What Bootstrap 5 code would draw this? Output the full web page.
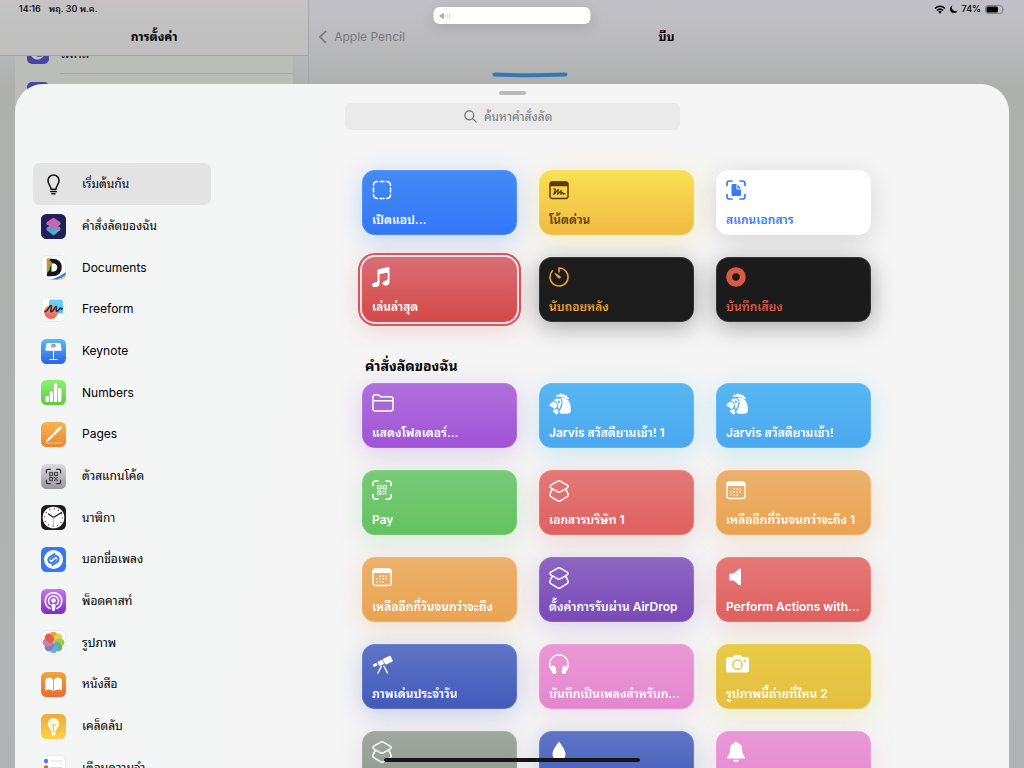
<!DOCTYPE html>
<html lang="th">
<head>
<meta charset="utf-8">
<meta name="viewport" content="width=device-width, initial-scale=1">
<title>การตั้งค่า</title>
<link href="https://cdn.jsdelivr.net/npm/bootstrap@5.3.0/dist/css/bootstrap.min.css" rel="stylesheet">
<style>
  body { font-family: Inter, "Noto Sans Thai Looped", "Noto Looped Thai", Loma, Waree, Garuda, "Noto Sans Thai", sans-serif; color: #000; background: #b4b6b6; }
  a, a:hover { color: inherit; text-decoration: none; }
  svg { display: block; flex: none; }

  /* Settings screen behind the sheet */
  .backdrop-page { background: linear-gradient(#c1c0c6 0, #bbbbbf 40px, #aeb0ae 84px, #b1b4b4 100%); }
  .master-pane { width: 30.2%; border-right: 1px solid #a5a6a9; }
  .master-head { height: 56px; background: linear-gradient(#c5c3c4, #bfbfbe); border-bottom: 1px solid #a3a4a4; }
  .status-line { height: 18px; font-size: 9px; font-weight: 500; line-height: 18px; padding: 0 19px; }
  .pane-title { font-size: 12px; font-weight: 700; line-height: 38px; margin: 0; text-align: center; }
  .settings-group { margin: -23px 15px 0; background: #bbbdb8; }
  .settings-row { height: 40px; padding-left: 12px; gap: 11px; font-size: 13px; }
  .settings-row + .settings-row .row-text { border-top: 1px solid #a6a9a6; }
  .row-text { height: 40px; line-height: 40px; }
  .settings-icon { width: 22px; height: 22px; border-radius: 5px; background: #4644a5; }
  .back-link { font-size: 12px; color: #77777b; gap: 7px; padding-left: 10px; }
  .back-link:hover { color: #77777b; }
  .volume-hud { top: 7px; left: 50%; width: 157px; height: 17px; transform: translateX(-50%); border-radius: 6px; background: #fff; box-shadow: 0 3px 14px #0002; padding-left: 6px; }

  /* Sheet */
  .sheet { top: 84px; left: 15px; right: 15px; bottom: 0; border-radius: 28px 28px 0 0; background: linear-gradient(100deg, #f3f5f5, #f5f5f5 30%); overflow: hidden; }
  .grabber { width: 27px; height: 4px; border-radius: 2px; background: #bababc; margin: 7px auto 8px; }
  .search-box { width: 335px; height: 27px; border-radius: 6px; background: #e9eae9; color: #77787a; gap: 7px; font-size: 12px; margin: 0 auto; cursor: text; }
  .search-box input { width: 76px; border: 0; padding: 0; background: none; outline: 0; color: inherit; }
  .search-box input::placeholder { color: #77787a; opacity: 1; }
  .side-nav { width: 209px; padding: 33px 13px 0 18px; }
  .side-link { height: 42px; border-radius: 7px; padding-left: 8px; gap: 16px; font-size: 12px; line-height: 24px; white-space: nowrap; }
  .side-nav li:nth-child(3n) .side-link { height: 41px; }
  .side-link.active { background: #e3e3e3; }
  .shortcut-area { padding-top: 40px; }
  .tile-grid { display: grid; grid-template-columns: repeat(3, 155px); gap: 22px; justify-content: center; }
  .section-title { width: 503px; margin: 32px auto 5px; font-size: 14px; font-weight: 700; line-height: 24px; }
  .tile { --glow: #0001; height: 65px; border: 0; border-radius: 13px; padding: 10px 9px 5px 10px; display: flex; flex-direction: column; justify-content: space-between; align-items: flex-start; text-align: left; color: #fff; font-size: 12px; font-weight: 600; background: linear-gradient(var(--from), var(--to)); box-shadow: 0 5px 24px var(--glow), inset 0 0 0 1px #ffffff1c; }
  .tile span { line-height: 20px; max-width: 100%; overflow: hidden; white-space: nowrap; }
  .t-azure { --from: #448bf7; --to: #3377f6; --glow: #448bf74d; }
  .t-note { --from: #f9e053; --to: #f0bb41; --glow: #f9e0534d; color: #60390a; }
  .t-white { --from: #fff; --to: #fff; --glow: #0002; color: #3b7cf2; }
  .t-music { --from: #d96e77; --to: #d44946; outline: 2px solid #d5565c; outline-offset: 2px; box-shadow: 0 0 0 2px #f3e3e3, 0 5px 24px #d4494640; }
  .t-timer { --from: #1c1c1c; --to: #1c1c1c; --glow: #0005; color: #ed9f38; }
  .t-record { --from: #1b1b1b; --to: #1b1b1b; --glow: #0005; color: #dc5946; }
  .t-purple { --from: #b06fdc; --to: #a153d7; --glow: #a153d740; }
  .t-sky { --from: #55b7f2; --to: #4ca8ef; --glow: #55d0f24d; }
  .t-green { --from: #78cb78; --to: #64c25f; --glow: #78cb7840; }
  .t-red { --from: #e47978; --to: #df605f; --glow: #e4797840; }
  .t-orange { --from: #ecb16c; --to: #eaa352; --glow: #ecb16c4d; }
  .t-violet { --from: #8c67c3; --to: #794ab8; --glow: #8c67c340; }
  .t-indigo { --from: #5e75c6; --to: #435abb; --glow: #5e75c64d; }
  .t-pink { --from: #e999d5; --to: #e586ce; --glow: #e999d540; }
  .t-yellow { --from: #e7cb45; --to: #e5be40; --glow: #e7dc454d; }
  .t-gray { --from: #9fa79e; --to: #8f9990; --glow: #9fa79e40; }
  .home-bar { left: 50%; bottom: 6px; width: 256px; height: 4px; border-radius: 2px; background: #151515; transform: translateX(-50%); }
</style>
</head>
<body>
<svg width="0" height="0" class="position-absolute" aria-hidden="true">
  <defs>
    <linearGradient id="g-key" x2="0" y2="1"><stop stop-color="#59bdf6"/><stop offset="1" stop-color="#2c61e6"/></linearGradient>
    <linearGradient id="g-num" x2="0" y2="1"><stop stop-color="#8df06f"/><stop offset="1" stop-color="#5ecb43"/></linearGradient>
    <linearGradient id="g-pag" x2="0" y2="1"><stop stop-color="#f5b54b"/><stop offset="1" stop-color="#ec8536"/></linearGradient>
    <linearGradient id="g-code" x2="0" y2="1"><stop stop-color="#dcdcde"/><stop offset="1" stop-color="#97969b"/></linearGradient>
    <linearGradient id="g-pod" x2="0" y2="1"><stop stop-color="#ca74f4"/><stop offset="1" stop-color="#7b2fb9"/></linearGradient>
    <linearGradient id="g-book" x2="0" y2="1"><stop stop-color="#f3a43c"/><stop offset="1" stop-color="#e96c30"/></linearGradient>
    <linearGradient id="g-tip" x2="0" y2="1"><stop stop-color="#f1a93b"/><stop offset="1" stop-color="#f9d248"/></linearGradient>
    <linearGradient id="g-s1" x2="1" y2="1"><stop stop-color="#ef4f8a"/><stop offset=".5" stop-color="#b96acb"/><stop offset="1" stop-color="#e8685e"/></linearGradient>
    <linearGradient id="g-s2" x2="1" y2="1"><stop stop-color="#ef6a62"/><stop offset=".45" stop-color="#4a9fe0"/><stop offset="1" stop-color="#56cfa8"/></linearGradient>
    <linearGradient id="g-ff" x2="0" y2="1"><stop stop-color="#f5a54f"/><stop offset="1" stop-color="#ec5d64"/></linearGradient>
    <linearGradient id="g-fb" x2="0" y2="1"><stop stop-color="#6bd5fa"/><stop offset="1" stop-color="#5ab9ee"/></linearGradient>
  </defs>
  <symbol id="i-layers" viewBox="0 0 20 22"><g fill="none" stroke="currentColor" stroke-width="1.500" stroke-linejoin="round"><path d="M8.300 1.300Q10 .3 11.700 1.300L18.200 5.100Q20 6.500 18.200 7.900L11.700 11.700Q10 12.700 8.300 11.700L1.800 7.900Q0 6.500 1.800 5.100Z"/><path d="M3.500 9.300L1.800 12.200Q-.1 15.300 1.800 16.700L8.300 20.700Q10 21.700 11.700 20.700L18.200 16.700Q20.100 15.300 18.200 12.200L16.500 9.300M1.800 12.200Q2.300 10.200 3.500 9.300M18.200 12.200Q17.700 10.200 16.500 9.300"/></g></symbol>
  <symbol id="i-scan" viewBox="0 0 20 20"><path fill="none" stroke="currentColor" stroke-width="1.700" stroke-linecap="round" d="M1 5.500V3.500Q1 1 3.500 1H6M14 1h2.500Q19 1 19 3.500V5.500M19 14.500v2Q19 19 16.500 19H14M6 19H3.500Q1 19 1 16.500v-2"/></symbol>
  <symbol id="i-qr" viewBox="0 0 10 10"><path fill="none" stroke="currentColor" stroke-width="1" d="M.5.5h3.500v3.500H.5ZM6 .5h3.500v3.500H6ZM.5 6H4v3.500H.5Z"/><path fill="currentColor" d="M1.700 1.700h1v1h-1zM7.200 1.700h1v1h-1zM1.700 7.200h1v1h-1zM5.500 5.500h1.300v1.300H5.500zM8.200 5.500h1.300v1.300H8.200zM6.800 6.800h1.500v1.500H6.800zM5.500 8.300h1.300v1.300H5.500zM8.200 8.300h1.300v1.300H8.200z"/></symbol>
  <symbol id="i-cal" viewBox="0 0 20 20"><rect x=".9" y="1.900" width="18.200" height="16.600" rx="2.600" fill="none" stroke="currentColor" stroke-width="1.400"/><path fill="currentColor" d="M1 6V4Q1 1.500 3.500 1.500h13Q19 1.500 19 4v2z"/><path stroke="currentColor" stroke-width="1.300" stroke-dasharray="1.300 1.700" d="M7.500 9h8.300M4.500 12h11.300M4.500 15h8.300"/></symbol>
  <symbol id="i-bird" viewBox="0 0 22 22"><path fill="currentColor" d="M12.500 4.700Q17 4 19.500 7.500Q21.800 10.500 21.800 15V18Q21.500 20.800 18 20.800H13Q10 20.500 10.500 18Q14.300 13 13.300 7.500Q13 5.700 11 4.900ZM6 6Q9 4.700 11.800 6.200Q13.500 10.500 9.800 16.500Q8.800 13 8.600 10.700Q7.500 7.800 4.700 7.800ZM0 12.500Q1.500 9.200 4.200 8.700Q7.300 8.700 8 12.200Q7.800 15.300 5.300 16Q4 14 0 12.500ZM4.500 17Q8 15.300 9 17Q10 20 8.200 21.300Q6.500 22 6 20L3.500 18.500ZM6.500 3.800L8.300 1.200L9.800 2L11.500.2L13 1.500L15 .8L15.700 2.300L18 2.500L18.300 4L20 5L19.300 6.300Q15.500 3 10 3.800Z"/><ellipse cx="9.900" cy="8.800" rx="1" ry="1.500" fill="#51b0f1"/></symbol>
</svg>

<div class="backdrop-page position-relative vh-100 overflow-hidden">
  <div class="d-flex h-100">
    <section class="master-pane overflow-hidden">
      <header class="master-head position-relative">
        <div class="status-line d-flex"><span class="pe-2">14:16</span><span>พฤ. 30 พ.ค.</span></div>
        <h1 class="pane-title">การตั้งค่า</h1>
      </header>
      <div class="overflow-hidden">
        <div class="settings-group">
          <a href="#focus" class="settings-row d-flex align-items-center">
            <svg class="settings-icon" viewBox="0 0 22 22"><path fill="#c3c4d0" d="M8 4A7 7 0 1 0 17 13A6 6 0 0 1 8 4Z"/></svg>
            <span class="row-text flex-fill">โฟกัส</span>
          </a>
          <a href="#screentime" class="settings-row d-flex align-items-center" aria-label="เวลาหน้าจอ">
            <span class="settings-icon"></span><span class="row-text flex-fill"></span>
          </a>
        </div>
      </div>
    </section>
    <section class="flex-fill">
      <div class="status-line d-flex justify-content-end align-items-center">
        <svg width="12" height="9" viewBox="0 0 12 9" class="me-1"><g fill="none" stroke="#000" stroke-width="1.500"><path d="M1 3.500Q6-1 11 3.500M2.900 5.500Q6 2.700 9.100 5.500"/></g><path d="M4.200 6.800Q6 5.400 7.800 6.800L6 8.700Z"/></svg>
        <svg width="8" height="8" viewBox="0 0 8 8" class="me-1"><path d="M2.500.3A4 4 0 1 0 7.700 5.400A3.700 3.700 0 0 1 2.500.3Z"/></svg>
        <span class="me-1">74%</span>
        <svg width="20" height="9" viewBox="0 0 20 9"><rect x=".5" y=".5" width="17" height="8" rx="2.500" fill="none" stroke="#818185"/><rect x="1.500" y="1.500" width="11.500" height="6" rx="1.500"/><path fill="#818185" d="M18.500 3Q20 4.500 18.500 6Z"/></svg>
      </div>
      <div class="row g-0 align-items-center">
        <div class="col-4"><a href="#pencil" class="back-link d-flex align-items-center"><svg width="8" height="14" viewBox="0 0 8 14"><path d="M7 1L1 7l6 6" fill="none" stroke="#77777b" stroke-width="1.600"/></svg><span>Apple Pencil</span></a></div>
        <div class="col-4"><h2 class="pane-title">บีบ</h2></div>
      </div>
      <svg width="76" height="6" viewBox="0 0 76 6" class="mt-3" style="margin-left: 25.600%"><path d="M2.500 2.500Q38 4 73.500 2.500" fill="none" stroke="#3579b8" stroke-width="4" stroke-linecap="round"/></svg>
    </section>
  </div>

  <div class="volume-hud position-absolute d-flex align-items-center" role="status" aria-label="ระดับเสียง">
    <svg width="12" height="8" viewBox="0 0 12 8"><path fill="#a8a8aa" d="M0 2.700h1.800L4.400.5v7L1.800 5.300H0Z"/><path d="M6 2.500Q7 4 6 5.500M7.700 1.500Q9.300 4 7.700 6.500M9.400.6Q11.600 4 9.400 7.400" fill="none" stroke="#cfcfd1" stroke-width=".8"/></svg>
  </div>

  <main class="sheet position-absolute d-flex flex-column" role="dialog" aria-label="คำสั่งลัด">
    <div>
      <div class="grabber"></div>
      <label class="search-box d-flex align-items-center justify-content-center mt-2">
        <svg width="13" height="13" viewBox="0 0 13 13"><g fill="none" stroke="#6f7072" stroke-width="1.200" stroke-linecap="round"><circle cx="5.300" cy="5.300" r="4.500"/><path d="M8.700 8.700l3.500 3.500"/></g></svg>
        <input type="text" placeholder="ค้นหาคำสั่งลัด" aria-label="ค้นหาคำสั่งลัด">
      </label>
    </div>
    <div class="d-flex">
      <nav class="side-nav flex-shrink-0">
        <ul class="list-unstyled m-0">
          <li><a href="#start" class="side-link active d-flex align-items-center">
            <svg width="25" height="25" viewBox="0 0 25 25"><g fill="none" stroke="#111" stroke-width="1.500" stroke-linecap="round"><path d="M10 17.200C9.900 13.500 7 12.500 7 8.500A5.500 5.500 0 0 1 18 8.500C18 12.500 15.100 13.500 15 17.200Z" stroke-linejoin="round"/><path d="M9.800 19.600h5.400M11 21.800h3"/></g></svg>
            เริ่มต้นกัน</a></li>
          <li><a href="#mine" class="side-link d-flex align-items-center">
            <svg width="25" height="25" viewBox="0 0 25 25"><rect width="25" height="25" rx="5.500" fill="#211f57"/><path fill="url(#g-s2)" d="M12.500 9.500L19 13.500Q20.500 15 19 16.300L13.700 20.500Q12.500 21.500 11.300 20.500L6 16.500Q4.500 15 6 13.500Z"/><path fill="url(#g-s1)" d="M11.300 4.300Q12.500 3.500 13.700 4.300L19 8Q20.500 9.500 19 11L16.500 12.500L19 14.500Q17 17 13.700 14.300L6 11Q4.500 9.500 6 8Z"/></svg>
            คำสั่งลัดของฉัน</a></li>
          <li><a href="#documents" class="side-link d-flex align-items-center">
            <svg width="25" height="25" viewBox="0 0 25 25"><rect x=".5" y=".5" width="24" height="24" rx="5.500" fill="#fff" stroke="#e9e9e9"/><path fill="none" stroke="#171717" stroke-width="4.500" d="M8.200 6H11Q18.500 6 18.500 12.500T10.500 19H8.200Z"/><path fill="#f18b32" d="M5.800 3.700h3v11l-3 3z"/><path fill="#62b946" d="M8.800 5l2.500 3-5.500 11z"/><path fill="#3378e6" d="M10 24.500Q19 22 24.500 17v4Q20 24 16 24.500Z"/><path fill="#f5cf42" d="M16 24.500Q21 23 24.500 20v1q-.5 3-3.500 3.500Z"/></svg>
            Documents</a></li>
          <li><a href="#freeform" class="side-link d-flex align-items-center">
            <svg width="25" height="25" viewBox="0 0 25 25"><rect x=".5" y=".5" width="24" height="24" rx="5.500" fill="#fff" stroke="#e9e9e9"/><rect x="8" y="2.500" width="14" height="14" rx="1.500" fill="url(#g-fb)"/><circle cx="10" cy="15" r="7" fill="url(#g-ff)"/><path d="M4 14.500C6 15 8.500 8.500 10 8.600S8.500 15 10.500 14.800S13.500 9 15 9.500S14 14.300 16 14.300S18.500 10.500 19.500 11S19.500 13.500 21.500 11.500" fill="none" stroke="#202a5c" stroke-width="1.500" stroke-linecap="round"/></svg>
            Freeform</a></li>
          <li><a href="#keynote" class="side-link d-flex align-items-center">
            <svg width="25" height="25" viewBox="0 0 25 25"><rect width="25" height="25" rx="5.500" fill="url(#g-key)"/><path fill="#fff" d="M6.500 4h12q.8 0 1 .8l1.200 6q.2.900-.7.900H5q-.9 0-.7-.9l1.200-6q.2-.8 1-.8ZM12 11.500h1V20h3.500v1h-8v-1H12Z"/><path fill="#e85d4f" d="M12.500 7V4.700A2.300 2.300 0 0 1 14.500 8Z"/><path fill="#f4b53f" d="M12.500 7L14.500 8A2.300 2.300 0 0 1 10.500 8Z"/><path fill="#4a9ff0" d="M12.500 7L10.500 8.200A2.300 2.300 0 0 1 12.500 4.700Z"/></svg>
            Keynote</a></li>
          <li><a href="#numbers" class="side-link d-flex align-items-center">
            <svg width="25" height="25" viewBox="0 0 25 25"><rect width="25" height="25" rx="5.500" fill="url(#g-num)"/><g fill="#fff"><rect x="4.500" y="16" width="3.300" height="6" rx=".8"/><rect x="8.700" y="11.500" width="3.300" height="10.500" rx=".8"/><rect x="12.900" y="3.500" width="3.300" height="18.500" rx=".8"/><rect x="17.100" y="8" width="3.300" height="14" rx=".8"/></g></svg>
            Numbers</a></li>
          <li><a href="#pages" class="side-link d-flex align-items-center">
            <svg width="25" height="25" viewBox="0 0 25 25"><rect width="25" height="25" rx="5.500" fill="url(#g-pag)"/><path d="M5 21h16" stroke="#f8c28c"/><path fill="#fff" d="M4.500 20.500L6 17.500L17.500 5.500Q19.500 4 20.700 4.500Q21 6 19.500 7.500L8 18.500Z"/><path d="M11 12l2.200 2.200" stroke="#f0a044" stroke-width=".7"/></svg>
            Pages</a></li>
          <li><a href="#codescan" class="side-link d-flex align-items-center">
            <svg width="25" height="25" viewBox="0 0 25 25" color="#333"><rect width="25" height="25" rx="5.500" fill="url(#g-code)"/><use href="#i-scan" x="4.500" y="4.500" width="16" height="16"/><use href="#i-qr" x="7.800" y="7.800" width="9.500" height="9.500"/></svg>
            ตัวสแกนโค้ด</a></li>
          <li><a href="#clock" class="side-link d-flex align-items-center">
            <svg width="25" height="25" viewBox="0 0 25 25"><rect width="25" height="25" rx="5.500" fill="#1b1b1b"/><circle cx="12.500" cy="12.500" r="10.800" fill="#fff"/><circle cx="12.500" cy="12.500" r="8.800" fill="none" stroke="#555" stroke-width="1.600" stroke-dasharray="1 3.608"/><path d="M12.500 12.500L7.500 9M12.500 12.500L20.500 7.500" stroke="#111" stroke-width="1.200" stroke-linecap="round"/><path d="M12.500 11v10.500" stroke="#eaa13a" stroke-width=".8"/></svg>
            นาฬิกา</a></li>
          <li><a href="#shazam" class="side-link d-flex align-items-center">
            <svg width="25" height="25" viewBox="0 0 25 25"><rect width="25" height="25" rx="5.500" fill="#3478f6"/><circle cx="12.500" cy="12.500" r="9.500" fill="#fff"/><g fill="none" stroke="#3478f6" stroke-width="2" stroke-linecap="round"><path d="M13.500 7L9.300 9.700Q6 12.300 8.200 15Q10.200 17 12.500 15L15 12.800"/><path d="M11.500 18L15.700 15.300Q19 12.700 16.800 10Q14.800 8 12.500 10L10 12.200"/></g></svg>
            บอกชื่อเพลง</a></li>
          <li><a href="#podcast" class="side-link d-flex align-items-center">
            <svg width="25" height="25" viewBox="0 0 25 25"><rect width="25" height="25" rx="5.500" fill="url(#g-pod)"/><g fill="none" stroke="#fff" stroke-width="1.500" stroke-linecap="round"><path d="M9 19.500A8.300 8.300 0 1 1 16 19.500"/><path d="M9 15.500A5 5 0 1 1 16 15.500"/></g><circle cx="12.500" cy="11.500" r="2.300" fill="#fff"/><path fill="#fff" d="M10.300 16Q10.300 14.700 12.500 14.700T14.700 16L14 21Q13.700 22 12.500 22T11 21Z"/></svg>
            พ็อดคาสท์</a></li>
          <li><a href="#photos" class="side-link d-flex align-items-center">
            <svg width="25" height="25" viewBox="0 0 25 25"><rect x=".5" y=".5" width="24" height="24" rx="5.500" fill="#fff" stroke="#e9e9e9"/><g opacity=".95"><rect x="8.800" y="1.700" width="7.400" height="10" rx="3.700" fill="#f09a37"/><rect x="8.800" y="1.700" width="7.400" height="10" rx="3.700" fill="#e2d140" transform="rotate(45 12.500 12.500)"/><rect x="8.800" y="1.700" width="7.400" height="10" rx="3.700" fill="#9fc54d" transform="rotate(90 12.500 12.500)"/><rect x="8.800" y="1.700" width="7.400" height="10" rx="3.700" fill="#5fae7b" transform="rotate(135 12.500 12.500)"/><rect x="8.800" y="1.700" width="7.400" height="10" rx="3.700" fill="#6ba3dc" transform="rotate(180 12.500 12.500)"/><rect x="8.800" y="1.700" width="7.400" height="10" rx="3.700" fill="#7879bd" transform="rotate(225 12.500 12.500)"/><rect x="8.800" y="1.700" width="7.400" height="10" rx="3.700" fill="#c07db0" transform="rotate(270 12.500 12.500)"/><rect x="8.800" y="1.700" width="7.400" height="10" rx="3.700" fill="#e55544" transform="rotate(315 12.500 12.500)"/></g></svg>
            รูปภาพ</a></li>
          <li><a href="#books" class="side-link d-flex align-items-center">
            <svg width="25" height="25" viewBox="0 0 25 25"><rect width="25" height="25" rx="5.500" fill="url(#g-book)"/><path fill="#fff" d="M12.100 7.500Q10.500 5.500 8 5.500T4.200 7.500V18.700Q5.500 17.500 8 17.500T12.100 19ZM12.900 7.500Q14.500 5.500 17 5.500T20.800 7.500V18.700Q19.500 17.500 17 17.500T12.900 19Z"/></svg>
            หนังสือ</a></li>
          <li><a href="#tips" class="side-link d-flex align-items-center">
            <svg width="25" height="25" viewBox="0 0 25 25"><rect width="25" height="25" rx="5.500" fill="url(#g-tip)"/><path fill="#fff8e3" d="M12.500 4A5.700 5.700 0 0 0 6.800 9.700C6.800 13 9.500 14 10 17.500H15C15.500 14 18.200 13 18.200 9.700A5.700 5.700 0 0 0 12.500 4ZM10.200 18.300h4.600L14.400 21Q12.500 23.500 10.600 21Z"/><path d="M10 11h5M12.500 11v6" stroke="#f4bc40" stroke-width=".9"/></svg>
            เคล็ดลับ</a></li>
          <li><a href="#reminders" class="side-link d-flex align-items-center">
            <svg width="25" height="25" viewBox="0 0 25 25"><rect x=".5" y=".5" width="24" height="24" rx="5.500" fill="#fff" stroke="#e9e9e9"/><circle cx="5" cy="6" r="2.200" fill="#3f82f7"/><circle cx="5" cy="12.500" r="2.200" fill="#e8554b"/><circle cx="5" cy="19" r="2.200" fill="#f09a37"/><path d="M9.500 6h12M9.500 12.500h12M9.500 19h12" stroke="#ddd"/></svg>
            เตือนความจำ</a></li>
        </ul>
      </nav>

      <div class="shortcut-area flex-fill">
        <div class="tile-grid">
          <button type="button" class="tile t-azure"><svg width="20" height="20" viewBox="0 0 20 20"><g fill="none" stroke="currentColor" stroke-width="1.500" stroke-linecap="round"><path d="M1.500 5.500Q1.500 1.500 5.500 1.500M14.500 1.500Q18.500 1.500 18.500 5.500M18.500 14.500Q18.500 18.500 14.500 18.500M5.500 18.500Q1.500 18.500 1.500 14.500M8 1.500h4M8 18.500h4M1.500 8v4M18.500 8v4"/></g></svg><span>เปิดแอป...</span></button>
          <button type="button" class="tile t-note"><svg width="20" height="20" viewBox="0 0 20 20"><rect x="1" y="2" width="18" height="16.500" rx="2.300" fill="none" stroke="currentColor" stroke-width="1.500"/><path fill="currentColor" d="M1 6.300V4Q1 1.500 3.500 1.500h13Q19 1.500 19 4v2.300z"/><path fill="none" stroke="currentColor" stroke-width="1.200" stroke-linecap="round" stroke-linejoin="round" d="M4.500 9H6.500L4.800 14.500L9.300 9.500L8.700 14.300L12.200 10.500L11.700 14.200L13.700 12.300L14.300 14.300L16 13.700"/></svg><span>โน้ตด่วน</span></button>
          <button type="button" class="tile t-white"><svg width="20" height="20" viewBox="0 0 20 20"><use href="#i-scan" width="20" height="20"/><path fill="currentColor" d="M6.500 4h4v4.500q0 1 1 1H15v5q0 1.500-1.500 1.500h-7Q5.500 16 5.500 15V5.500Q5.500 4 6.500 4ZM11.500 4.500L15 8.500h-3.500Z"/></svg><span>สแกนเอกสาร</span></button>
          <button type="button" class="tile t-music"><svg width="20" height="20" viewBox="0 0 20 20"><path fill="currentColor" d="M5.500 3.400Q5.500 2.500 6.500 2.200L16 .1Q17.500 0 17.500 1.200V15Q17.500 18.300 14 18.500T10.500 16Q10.500 14 13.500 13.400Q15.700 13.200 15.700 12V5.500L7.500 7.300V17Q7.300 20 3.500 20T0 17.800Q0 15.800 2.800 15.400Q5.500 15 5.500 13.500Z"/></svg><span>เล่นล่าสุด</span></button>
          <button type="button" class="tile t-timer"><svg width="20" height="20" viewBox="0 0 20 20"><path d="M3.500 3.800A9 9 0 1 0 10 1V5" fill="none" stroke="currentColor" stroke-width="1.600" stroke-linecap="round" stroke-linejoin="round"/><path fill="currentColor" d="M5.500 6Q6 5.500 11.300 9Q12.300 10.500 11.300 11.300Q10 12 9 11Q5 6.500 5.500 6Z"/></svg><span>นับถอยหลัง</span></button>
          <button type="button" class="tile t-record"><svg width="20" height="20" viewBox="0 0 20 20"><circle cx="10" cy="10" r="6.800" fill="none" stroke="currentColor" stroke-width="6"/></svg><span>บันทึกเสียง</span></button>
        </div>

        <h2 class="section-title">คำสั่งลัดของฉัน</h2>

        <div class="tile-grid">
          <button type="button" class="tile t-purple"><svg width="22" height="20" viewBox="0 0 22 20"><path fill="none" stroke="currentColor" stroke-width="1.500" stroke-linejoin="round" d="M1 15.500V4Q1 1.800 3.200 1.800H6.500L9 3.800H18.800Q21 3.800 21 6V15.800Q21 18 18.800 18H3.200Q1 18 1 15.500ZM1 7.700H21"/></svg><span>แสดงโฟลเดอร์...</span></button>
          <button type="button" class="tile t-sky"><svg width="22" height="22"><use href="#i-bird"/></svg><span>Jarvis สวัสดียามเช้า! 1</span></button>
          <button type="button" class="tile t-sky"><svg width="22" height="22"><use href="#i-bird"/></svg><span>Jarvis สวัสดียามเช้า!</span></button>

          <button type="button" class="tile t-green"><svg width="20" height="20" viewBox="0 0 20 20"><use href="#i-scan" width="20" height="20"/><use href="#i-qr" x="5" y="5" width="10" height="10"/></svg><span>Pay</span></button>
          <button type="button" class="tile t-red"><svg width="20" height="22"><use href="#i-layers"/></svg><span>เอกสารบริษัท 1</span></button>
          <button type="button" class="tile t-orange"><svg width="20" height="20"><use href="#i-cal"/></svg><span>เหลืออีกกี่วันจนกว่าจะถึง 1</span></button>

          <button type="button" class="tile t-orange"><svg width="20" height="20"><use href="#i-cal"/></svg><span>เหลืออีกกี่วันจนกว่าจะถึง</span></button>
          <button type="button" class="tile t-violet"><svg width="20" height="22"><use href="#i-layers"/></svg><span>ตั้งค่าการรับผ่าน AirDrop</span></button>
          <button type="button" class="tile t-red"><svg width="20" height="20" viewBox="0 0 20 20"><path fill="currentColor" d="M4.500 6.500H7.500L13 2Q15 .8 15 3V17Q15 19.200 13 18L7.500 13.500H4.500Q3.300 13.500 3.300 12V8Q3.300 6.500 4.500 6.500Z"/></svg><span>Perform Actions with...</span></button>

          <button type="button" class="tile t-indigo"><svg width="21" height="20" viewBox="0 0 21 20"><g fill="currentColor"><rect x="11.500" y="3" width="8.500" height="6.500" rx="1.200" transform="rotate(-25 15.700 6)"/><rect x="6" y="6.500" width="5.500" height="4.700" rx=".9" transform="rotate(-25 8.700 8.800)"/><rect x="1" y="9.600" width="4.300" height="2.800" rx=".8" transform="rotate(-25 3 11)"/></g><path d="M9.300 12.200L6 19M12 12.200L15.500 19" stroke="currentColor" stroke-width="1.400" stroke-linecap="round"/></svg><span>ภาพเด่นประจำวัน</span></button>
          <button type="button" class="tile t-pink"><svg width="20" height="20" viewBox="0 0 20 20"><path fill="none" stroke="currentColor" stroke-width="1.500" d="M2.500 16.500Q.8 13.500.8 9.800A9.200 9 0 0 1 19.200 9.800Q19.200 13.500 17.500 16.500"/><rect x="2.500" y="11.700" width="4.500" height="8.300" rx="2" fill="currentColor" transform="rotate(-10 4.700 16)"/><rect x="13" y="11.700" width="4.500" height="8.300" rx="2" fill="currentColor" transform="rotate(10 15.300 16)"/></svg><span>บันทึกเป็นเพลงสำหรับก...</span></button>
          <button type="button" class="tile t-yellow"><svg width="23" height="20" viewBox="0 0 23 20"><path fill="currentColor" d="M2.500 3H6.500L8 1.500Q8.500 1 9.500 1H13.500Q14.500 1 15 1.500L16.500 3H20.500Q23 3 23 5.500V16Q23 18.500 20.500 18.500H2.500Q0 18.500 0 16V5.500Q0 3 2.500 3Z"/><circle cx="11.500" cy="10.700" r="4.600" fill="none" stroke="#e6c443" stroke-width="1.500"/><circle cx="18.500" cy="7" r="1.200" fill="#e6c443"/></svg><span>รูปภาพนี้ถ่ายที่ไหน 2</span></button>

          <button type="button" class="tile t-gray" aria-label="คำสั่งลัด"><svg width="20" height="22"><use href="#i-layers"/></svg></button>
          <button type="button" class="tile t-indigo" aria-label="น้ำ"><svg width="20" height="20" viewBox="0 0 20 20"><path fill="currentColor" d="M10 .5C12.500 4 16.500 9 16.500 13.300A6.500 6.500 0 0 1 3.500 13.300C3.500 9 7.500 4 10 .5Z"/></svg></button>
          <button type="button" class="tile t-pink" aria-label="เตือน"><svg width="20" height="21" viewBox="0 0 20 21"><path fill="currentColor" d="M10 .5Q11.500.5 12 2Q16 3.500 16 8Q16 12 17.500 14T19 17Q19 17.500 18 17.500H2Q1 17.500 1 17Q1 15.500 2.500 14T4 8Q4 3.500 8 2Q8.500.5 10 .5ZM7 18.700H13Q12.500 21 10 21T7 18.700Z"/></svg></button>
        </div>
      </div>
    </div>
  </main>
  <div class="home-bar position-absolute"></div>
</div>
<script src="https://cdn.jsdelivr.net/npm/bootstrap@5.3.0/dist/js/bootstrap.bundle.min.js"></script>
</body>
</html>
